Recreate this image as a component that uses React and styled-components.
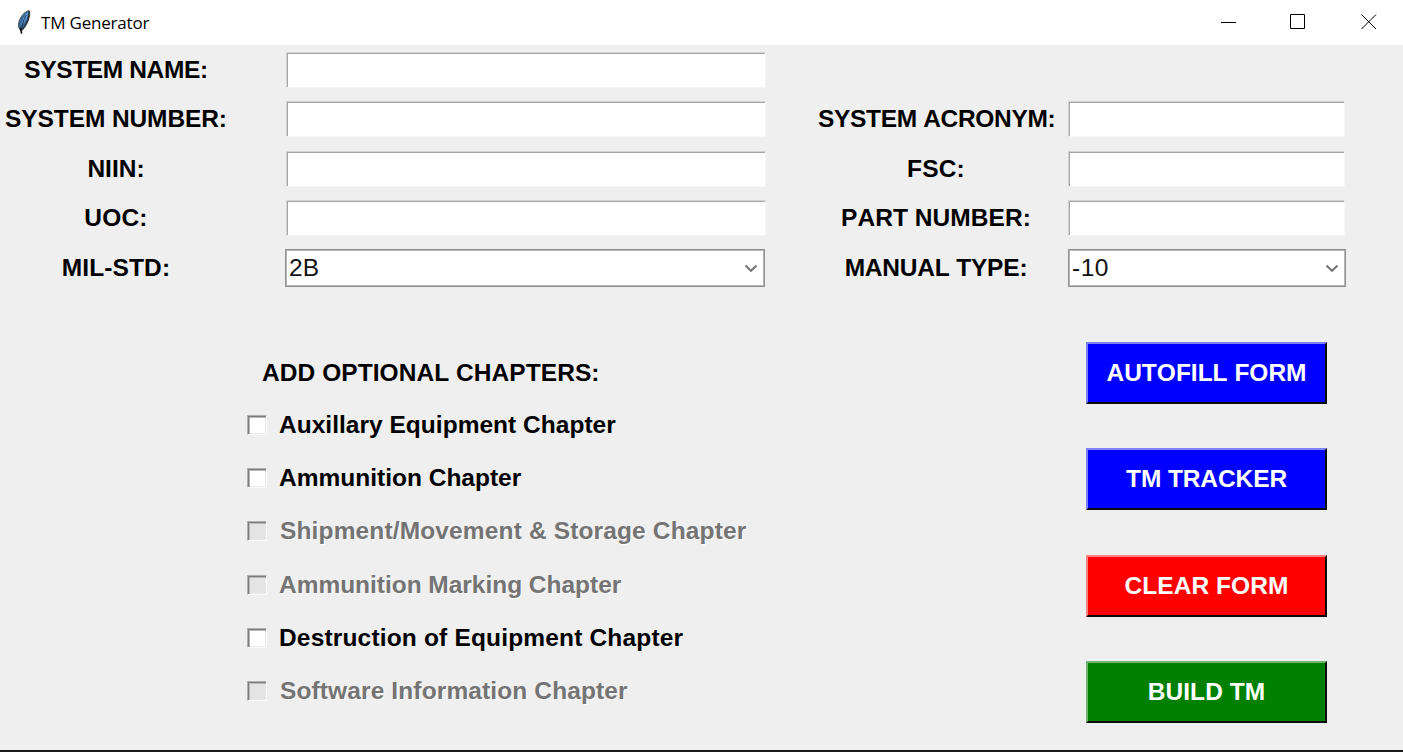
import React from "react";
import styled, { createGlobalStyle } from "styled-components";

const GlobalStyle = createGlobalStyle`
  * { box-sizing: border-box; }
  body { margin: 0; background: #efefef; overflow: hidden; }
`;

const Window = styled.div`
  display: flex;
  flex-direction: column;
  width: 1403px;
  height: 752px;
  background: #efefef;
  border-bottom: 2px solid #1b1b1d;
  color: #000;
  font-family: "Liberation Sans", Arial, sans-serif;
  font-size: 24.5px;
  font-kerning: none;
`;

const TitleBar = styled.header`
  display: flex;
  align-items: center;
  height: 45px;
  flex: none;
  padding: 0 26px 2px 15px;
  background: #fff;
`;

const Title = styled.span`
  flex: 1;
  margin-left: 8px;
  font-family: "Open Sans", "Noto Sans", sans-serif;
  font-size: 17px;
  line-height: 24px;
  letter-spacing: ${(p) => p.$tracking}px;
  padding-top: 2px;
`;

const WindowControls = styled.div`
  display: grid;
  grid-template-columns: 69px 71px 16px;
`;

const Form = styled.section`
  display: grid;
  grid-template-columns: 232px 480px 236px 278px;
  grid-template-rows: 49px 50px 49px 50px 50px;
  align-items: center;
  height: 248px;
  flex: none;
`;

const Label = styled.label`
  grid-column: ${(p) => (p.$right ? 3 : 1)};
  grid-row: ${(p) => p.$row};
  margin-left: ${(p) => (p.$right ? 106 : 0)}px;
  width: ${(p) => (p.$right ? 236 : 232)}px;
  text-align: center;
  white-space: nowrap;
  font-weight: bold;
  line-height: 28px;
  letter-spacing: ${(p) => p.$tracking || 0}px;
`;

const Entry = styled.input`
  grid-column: ${(p) => (p.$right ? 4 : 2)};
  grid-row: ${(p) => p.$row};
  margin: 0 0 0 ${(p) => (p.$right ? 120 : 54)}px;
  width: ${(p) => (p.$right ? 277 : 480)}px;
  height: 36px;
  padding: 0 4px;
  border: 1px solid;
  border-color: #d2d2d2 #f6f6f6 #f6f6f6 #d2d2d2;
  border-radius: 0;
  background: #fff;
  box-shadow: inset 1px 1px 0 #a6a6a6;
  outline: none;
  font: inherit;
`;

const Combo = styled.div`
  grid-column: ${(p) => (p.$right ? 4 : 2)};
  grid-row: 5;
  display: flex;
  align-items: center;
  justify-content: space-between;
  margin-left: ${(p) => (p.$right ? 120 : 53)}px;
  width: ${(p) => (p.$right ? 278 : 480)}px;
  height: 38px;
  padding: 0 6px 0 3px;
  border: 1px solid #929292;
  box-shadow: inset 0 0 0 1px #b4b4b4;
  background: #fff;
  color: #111;
  line-height: 28px;
  letter-spacing: ${(p) => p.$tracking || 0}px;
`;

const Lower = styled.section`
  display: flex;
  justify-content: space-between;
  padding: 49px 76px 0 247px;
`;

const Chapters = styled.div`
  display: flex;
  flex-direction: column;
`;

const ChaptersTitle = styled.h2`
  margin: 0 0 11.5px;
  padding: 17px 0 0 15px;
  font-size: inherit;
  line-height: 28px;
  letter-spacing: 0.06px;
`;

const Chapter = styled.label`
  display: flex;
  align-items: center;
  height: 53.2px;
  gap: ${(p) => p.$gap || 12}px;
  white-space: nowrap;
  font-weight: bold;
  line-height: 28px;
  letter-spacing: ${(p) => p.$tracking || 0}px;
  color: ${(p) => (p.$disabled ? "#747474" : "#000")};
  text-shadow: ${(p) => (p.$disabled ? "1px 1px 0 #fbfbfb" : "none")};
`;

const CheckBox = styled.span`
  width: 20px;
  height: 20px;
  border: 1px solid;
  border-color: #b0b0b0 #fbfbfb #fbfbfb #b0b0b0;
  background: ${(p) => (p.$disabled ? "#e4e4e4" : "#fff")};
  box-shadow: inset 1px 1px 0 #7c7c7c, inset 2px 2px 0 #b8b8b8, inset -1px -1px 0 #e9e9e9;
`;

const Actions = styled.div`
  display: flex;
  flex-direction: column;
  gap: 44.4px;
`;

const ActionButton = styled.button`
  width: 241px;
  height: 62px;
  padding: 0;
  border: 2px solid;
  border-color: ${(p) => p.$light} #0a0a0a #0a0a0a ${(p) => p.$light};
  background: ${(p) => p.$color};
  color: #fff;
  font: bold 24.5px/28px "Liberation Sans", Arial, sans-serif;
  font-kerning: none;
  letter-spacing: ${(p) => p.$tracking || 0}px;
`;

const Feather = () => (
  <svg width="18" height="26" viewBox="0 0 18 26">
    <path d="M14.2 1.6 C9.5 2.6 5.5 7.5 4 12.5 C3 16 3.3 18.6 5.2 21 L7.2 21.4 C10 18.5 13 13.5 14.2 8.5 C14.9 5.5 15 3 14.2 1.6Z" fill="#3a6898" stroke="#55585c" strokeWidth="1" />
    <path d="M13 3 C9.5 6 7 11 6.3 16.5 C10 13.5 12.6 8.5 13 3Z" fill="#66a3e2" />
    <path d="M13.9 2.5 C14.7 7.5 12 14.5 7.5 20.5" fill="none" stroke="#2b2d30" strokeWidth="1.2" />
    <path d="M11.3 6 C8.5 11 6.8 16 6.3 24.5" fill="none" stroke="#1c2d44" strokeWidth="1" />
    <path d="M5.3 18.5 L6.7 24.5" fill="none" stroke="#18191b" strokeWidth="1.6" />
  </svg>
);

const Chevron = () => (
  <svg width="14" height="10" viewBox="0 0 14 10">
    <path d="M1.5 2.5 L7 7.8 L12.5 2.5" fill="none" stroke="#747474" strokeWidth="2" />
  </svg>
);

const leftFields = [
  ["SYSTEM NAME:", -0.35],
  ["SYSTEM NUMBER:", -0.1],
  ["NIIN:", 0],
  ["UOC:", 0.2],
];
const rightFields = [
  ["SYSTEM ACRONYM:", -0.33],
  ["FSC:", 0.2],
  ["PART NUMBER:", 0.05],
];
const chapters = [
  ["Auxillary Equipment Chapter", false, 0.02, 12],
  ["Ammunition Chapter", false, 0, 12],
  ["Shipment/Movement & Storage Chapter", true, 0.14, 13],
  ["Ammunition Marking Chapter", true, -0.03, 12],
  ["Destruction of Equipment Chapter", false, 0.17, 12],
  ["Software Information Chapter", true, 0.12, 13],
];
const actions = [
  ["AUTOFILL FORM", "#0000ff", "#8080ff", 0],
  ["TM TRACKER", "#0000ff", "#8080ff", -0.1],
  ["CLEAR FORM", "#ff0000", "#ff8080", 0.05],
  ["BUILD TM", "#008000", "#70b670", 0.05],
];

export default function App() {
  return (
    <Window>
      <GlobalStyle />
      <TitleBar>
        <Feather />
        <Title $tracking={-0.2}>TM Generator</Title>
        <WindowControls>
          <svg width="16" height="16"><path d="M0 8.5H15" stroke="#000" /></svg>
          <svg width="16" height="16"><path d="M.5 .5H14.5V14.5H.5Z" fill="none" stroke="#000" /></svg>
          <svg width="16" height="16"><path d="M.5 .5L15 15M15 .5L.5 15" stroke="#000" strokeWidth="1" /></svg>
        </WindowControls>
      </TitleBar>
      <Form>
        {leftFields.map(([text, tracking], i) => (
          <React.Fragment key={text}>
            <Label $row={i + 1} $tracking={tracking}>{text}</Label>
            <Entry $row={i + 1} />
          </React.Fragment>
        ))}
        {rightFields.map(([text, tracking], i) => (
          <React.Fragment key={text}>
            <Label $right $row={i + 2} $tracking={tracking}>{text}</Label>
            <Entry $right $row={i + 2} />
          </React.Fragment>
        ))}
        <Label $row={5} $tracking={0.1}>MIL-STD:</Label>
        <Combo>2B<Chevron /></Combo>
        <Label $right $row={5} $tracking={-0.2}>MANUAL TYPE:</Label>
        <Combo $right $tracking={0.5}>-10<Chevron /></Combo>
      </Form>
      <Lower>
        <Chapters>
          <ChaptersTitle>ADD OPTIONAL CHAPTERS:</ChaptersTitle>
          {chapters.map(([text, disabled, tracking, gap]) => (
            <Chapter key={text} $disabled={disabled} $tracking={tracking} $gap={gap}>
              <CheckBox $disabled={disabled} />
              {text}
            </Chapter>
          ))}
        </Chapters>
        <Actions>
          {actions.map(([text, color, light, tracking]) => (
            <ActionButton key={text} $color={color} $light={light} $tracking={tracking}>{text}</ActionButton>
          ))}
        </Actions>
      </Lower>
    </Window>
  );
}
